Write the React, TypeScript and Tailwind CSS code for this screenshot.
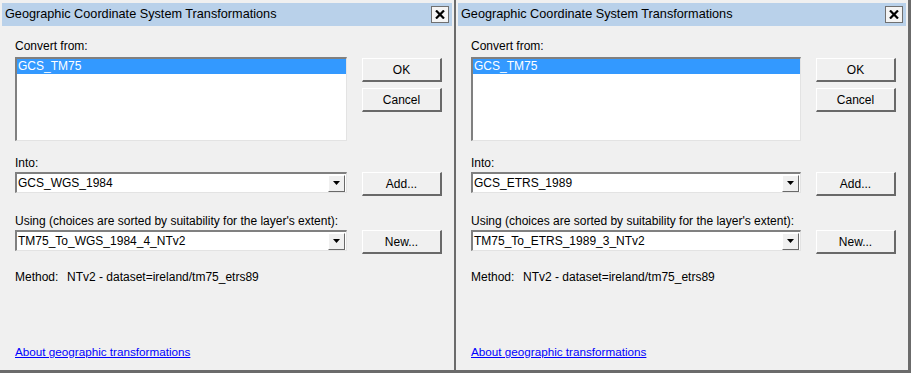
import React from 'react';

interface DialogProps {
  into: string;
  using: string;
  className?: string;
}

const font = { fontFamily: '"Liberation Sans", Arial, sans-serif' };

function CloseButton() {
  return (
    <div className="w-[18px] h-[17px] bg-[#f4f4f4] border border-[#707070] flex items-center justify-center">
      <svg width="10" height="9" viewBox="0 0 10 9">
        <path d="M1 0.5 L9 8.5 M9 0.5 L1 8.5" stroke="#000" strokeWidth="2.2" />
      </svg>
    </div>
  );
}

function Button({ label }: { label: string }) {
  return (
    <div className="w-[80px] h-[24px] bg-[#f0f0f0] border-t border-l border-t-white border-l-white border-r-2 border-b-2 border-r-[#696969] border-b-[#696969] flex items-center justify-center text-[12px] text-black">
      {label}
    </div>
  );
}

function Combo({ value }: { value: string }) {
  return (
    <div className="w-[332px] h-[21px] bg-white border-t-2 border-l-2 border-t-[#808080] border-l-[#808080] border-r border-b border-r-[#e3e3e3] border-b-[#e3e3e3] flex items-center">
      <span className="flex-1 pl-[1px] text-[12px] text-black">{value}</span>
      <div className="w-[17px] h-[17px] mr-[1px] bg-[#f0f0f0] border-t border-l border-t-white border-l-white border-r border-b border-r-[#696969] border-b-[#696969] flex items-center justify-center">
        <svg width="7" height="4" viewBox="0 0 7 4">
          <path d="M0 0 H7 L3.5 4 Z" fill="#000" />
        </svg>
      </div>
    </div>
  );
}

function Dialog({ into, using, className }: DialogProps) {
  return (
    <div className={`flex flex-col bg-[#f0f0f0] pt-[3px] px-[2px] ${className ?? ''}`}>
      {/* title bar */}
      <div className="h-[23px] bg-[#b9d1ea] flex items-center justify-between pl-[3px] pr-[3px]">
        <span className="text-[12.7px] text-black">Geographic Coordinate System Transformations</span>
        <CloseButton />
      </div>

      <div className="flex-1 flex flex-col pl-[13px] pr-[10px]">
        <div className="mt-[13px] text-[12px] leading-[14px] text-black">Convert from:</div>

        <div className="flex mt-[4px]">
          <div className="w-[332px] h-[84px] bg-white border-t-2 border-l-2 border-t-[#808080] border-l-[#808080] border-r border-b border-r-[#e3e3e3] border-b-[#e3e3e3]">
            <div className="h-[15px] bg-[#3399ff] text-white text-[12px] leading-[15px] pl-[1px]">GCS_TM75</div>
          </div>
          <div className="ml-[15px] flex flex-col gap-[6px] mt-[1px]">
            <Button label="OK" />
            <Button label="Cancel" />
          </div>
        </div>

        <div className="mt-[15px] text-[12px] leading-[14px] text-black">Into:</div>
        <div className="flex items-start mt-[2px]">
          <Combo value={into} />
          <div className="ml-[15px]">
            <Button label="Add..." />
          </div>
        </div>

        <div className="mt-[18px] text-[12px] leading-[14px] text-black">
          Using (choices are sorted by suitability for the layer's extent):
        </div>
        <div className="flex items-start mt-[2px]">
          <Combo value={using} />
          <div className="ml-[15px]">
            <Button label="New..." />
          </div>
        </div>

        <div className="mt-[16px] flex text-[12px] leading-[14px] text-black">
          <span className="w-[52px]">Method:</span>
          <span>NTv2 - dataset=ireland/tm75_etrs89</span>
        </div>

        <div className="mt-auto mb-[7px]">
          <a href="#" className="text-[11.7px] leading-[14px] text-[#0000ff] underline">
            About geographic transformations
          </a>
        </div>
      </div>
    </div>
  );
}

export default function App() {
  return (
    <div className="w-[911px] h-[373px] flex flex-col bg-[#f0f0f0]" style={font}>
      <div className="flex-1 flex">
        <Dialog className="w-[454px]" into="GCS_WGS_1984" using="TM75_To_WGS_1984_4_NTv2" />
        <div className="w-[2px] bg-[#6b6b6b]" />
        <Dialog className="w-[452px]" into="GCS_ETRS_1989" using="TM75_To_ETRS_1989_3_NTv2" />
        <div className="w-[3px] bg-[#6b6b6b]" />
      </div>
      <div className="h-[3px] bg-[#6b6b6b]" />
    </div>
  );
}
